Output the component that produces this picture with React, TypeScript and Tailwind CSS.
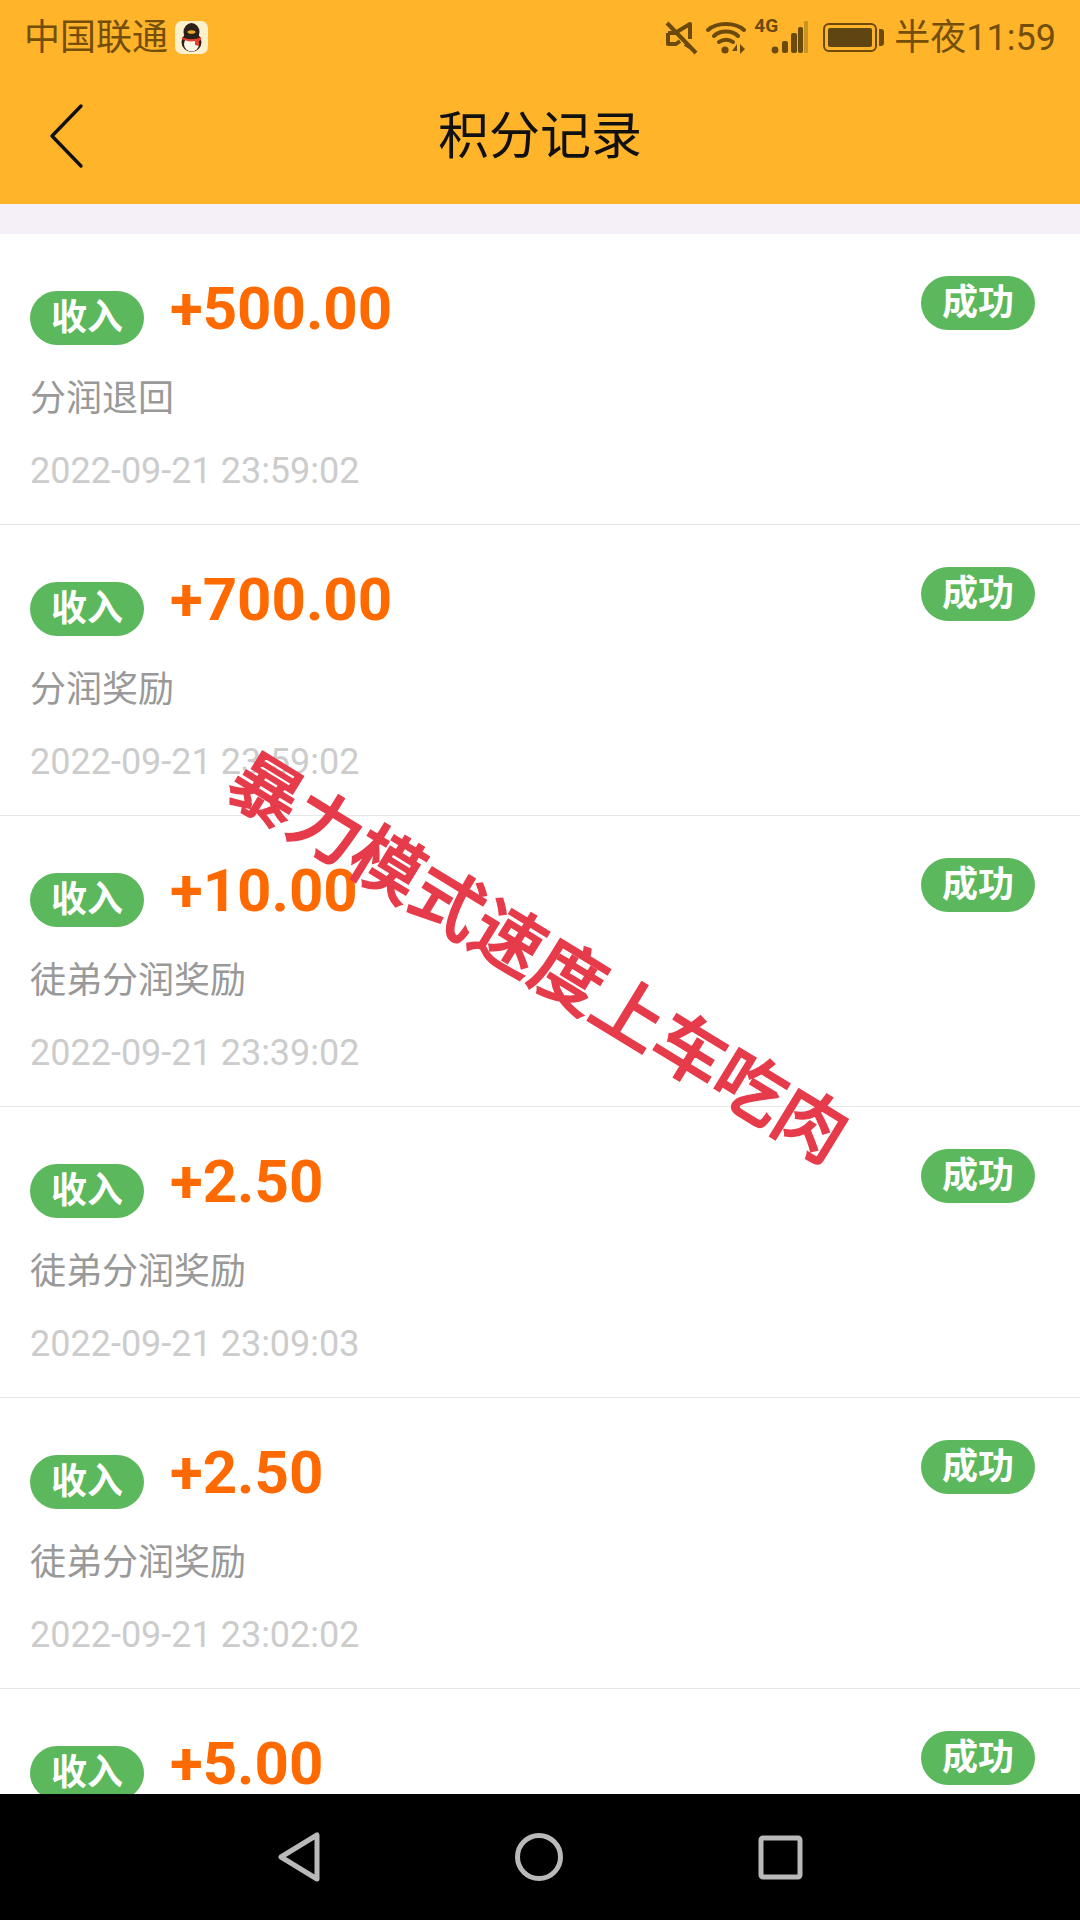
const records = [
  { amount: "+500.00", title: "分润退回", time: "2022-09-21 23:59:02" },
  { amount: "+700.00", title: "分润奖励", time: "2022-09-21 23:59:02" },
  { amount: "+10.00", title: "徒弟分润奖励", time: "2022-09-21 23:39:02" },
  { amount: "+2.50", title: "徒弟分润奖励", time: "2022-09-21 23:09:03" },
  { amount: "+2.50", title: "徒弟分润奖励", time: "2022-09-21 23:02:02" },
  { amount: "+5.00", title: "徒弟分润奖励", time: "2022-09-21 22:59:02" },
];

const StatusIcons = () => (
  <div className="flex items-center">
    <svg width="34" height="36" viewBox="0 0 34 36" fill="none" stroke="#6b4a0c" strokeWidth="4">
      <path d="M2 3 L31 33" />
      <path d="M3 13 H10 L25 4 V19 M25 27 L20 24 M3 13 V24 H11 L15 21" strokeLinejoin="round" />
    </svg>
    <svg className="ml-[7px]" width="40" height="34" viewBox="0 0 40 34" fill="none" stroke="#6b4a0c" strokeWidth="4" strokeLinecap="round">
      <path d="M2 9 C11 1 29 1 38 9" />
      <path d="M8 15 C14 9 26 9 32 15" />
      <path d="M13 21 C17 18 23 18 27 21" />
      <circle cx="19" cy="29" r="3.6" fill="#6b4a0c" stroke="none" />
      <path d="M31 23 L26 30 H31 V23 M34 23 V33 L39 28 Z" fill="#6b4a0c" stroke="none" />
    </svg>
    <div className="ml-[8px] relative w-[54px] h-[36px]">
      <span className="absolute left-0 top-[-4px] text-[19px] leading-[20px] font-bold text-[#6b4a0c] font-[Roboto,sans-serif]">
        4G
      </span>
      <svg className="absolute left-0 top-0" width="54" height="36" viewBox="0 0 54 36" fill="#6b4a0c">
        <circle cx="21" cy="30" r="3.4" />
        <rect x="28" y="21" width="6" height="12" rx="2" />
        <rect x="37" y="13" width="6" height="20" rx="2" />
        <rect x="44" y="7" width="5" height="26" rx="2" />
        <rect x="50" y="1" width="4" height="32" rx="1" fill="#c9951f" />
      </svg>
    </div>
    <div className="ml-[15px] flex items-center">
      <div className="w-[54px] h-[29px] rounded-[6px] border-[2px] border-[#6b4a0c] p-[3px]">
        <div className="w-full h-full bg-[#5f4511] rounded-[2px]" />
      </div>
      <div className="ml-[2px] w-[5px] h-[17px] rounded-r-[3px] bg-[#6b4a0c]" />
    </div>
  </div>
);

const QqIcon = () => (
  <svg width="33" height="33" viewBox="0 0 33 33">
    <rect width="33" height="33" rx="7" fill="#fdf0cc" />
    <ellipse cx="16.5" cy="21" rx="10" ry="10" fill="#2b2118" />
    <ellipse cx="16.5" cy="23" rx="7.5" ry="7.5" fill="#fdf6e6" />
    <ellipse cx="16.5" cy="11" rx="8" ry="9" fill="#2b2118" />
    <ellipse cx="16.5" cy="11" rx="4" ry="1.8" fill="#e9a82b" />
    <path d="M7 16 C12 19 21 19 26 16 L26 19 L24 20 L24 25 L20 24 L20 20 C15 21 11 20 7 18 Z" fill="#e8402f" />
  </svg>
);

const Pill = ({ text }: { text: string }) => (
  <div className="w-[114px] h-[54px] rounded-full bg-[#5cb85c] flex items-center justify-center text-white text-[36px] font-bold leading-none">
    {text}
  </div>
);

const Row = ({ amount, title, time }: { amount: string; title: string; time: string }) => (
  <div className="h-[291px] shrink-0 bg-white border-b border-[#e6e6e6] pl-[30px] pr-[45px] pt-[42px] flex justify-between items-start">
    <div className="flex flex-col">
      <div className="flex items-start">
        <div className="mt-[15px]">
          <Pill text="收入" />
        </div>
        <span className="ml-[26px] mt-[6px] text-[60px] leading-[54px] font-bold text-[#ff6a00]">{amount}</span>
      </div>
      <div className="mt-[27px] text-[36px] leading-[54px] text-[#999999]">{title}</div>
      <div className="mt-[18px] text-[36px] leading-[54px] text-[#cccccc]">{time}</div>
    </div>
    <Pill text="成功" />
  </div>
);

export default function App() {
  return (
    <div className="relative w-[1080px] h-[1920px] flex flex-col overflow-hidden bg-[#f5f0f7] font-[Roboto,'Noto_Sans_CJK_SC',sans-serif]">
      <header className="h-[204px] shrink-0 bg-[#ffb42a] flex flex-col">
        <div className="h-[75px] pl-[24px] pr-[24px] flex items-center justify-between text-[36px] text-[#734f0b]">
          <div className="flex items-center gap-[7px]">
            <span>中国联通</span>
            <QqIcon />
          </div>
          <div className="flex items-center gap-[10px]">
            <StatusIcons />
            <span>半夜11:59</span>
          </div>
        </div>
        <div className="flex-1 relative flex items-center justify-center pb-[6px]">
          <svg className="absolute left-[48px] top-[28px]" width="36" height="66" viewBox="0 0 36 66" fill="none" stroke="#111" strokeWidth="3.4" strokeLinecap="round" strokeLinejoin="round">
            <path d="M33 3 L4 33 L33 63" />
          </svg>
          <h1 className="text-[51px] leading-none text-[#111]">积分记录</h1>
        </div>
      </header>
      <div className="h-[30px] shrink-0" />
      <main className="flex-1 min-h-0 overflow-hidden flex flex-col bg-white">
        {records.map((r, i) => (
          <Row key={i} amount={r.amount} title={r.title} time={r.time} />
        ))}
      </main>
      <nav className="h-[126px] shrink-0 bg-black flex items-center justify-center">
        <div className="flex items-center gap-[195px]">
          <svg width="42" height="50" viewBox="0 0 42 50" fill="none" stroke="#b9b9b9" strokeWidth="5" strokeLinejoin="round">
            <path d="M39 3 V47 L3 25 Z" />
          </svg>
          <svg width="48" height="48" viewBox="0 0 48 48" fill="none" stroke="#b9b9b9" strokeWidth="5">
            <circle cx="24" cy="24" r="21.5" />
          </svg>
          <svg width="45" height="45" viewBox="0 0 45 45" fill="none" stroke="#b9b9b9" strokeWidth="5" strokeLinejoin="round">
            <rect x="3" y="3" width="39" height="39" rx="2" />
          </svg>
        </div>
      </nav>
      <div className="absolute left-[183px] top-[923px] whitespace-nowrap rotate-[31.5deg] text-[#e63b4a] text-[71px] leading-none font-medium [-webkit-text-stroke:1.5px_#e63b4a]">
        暴力模式速度上车吃肉
      </div>
    </div>
  );
}
